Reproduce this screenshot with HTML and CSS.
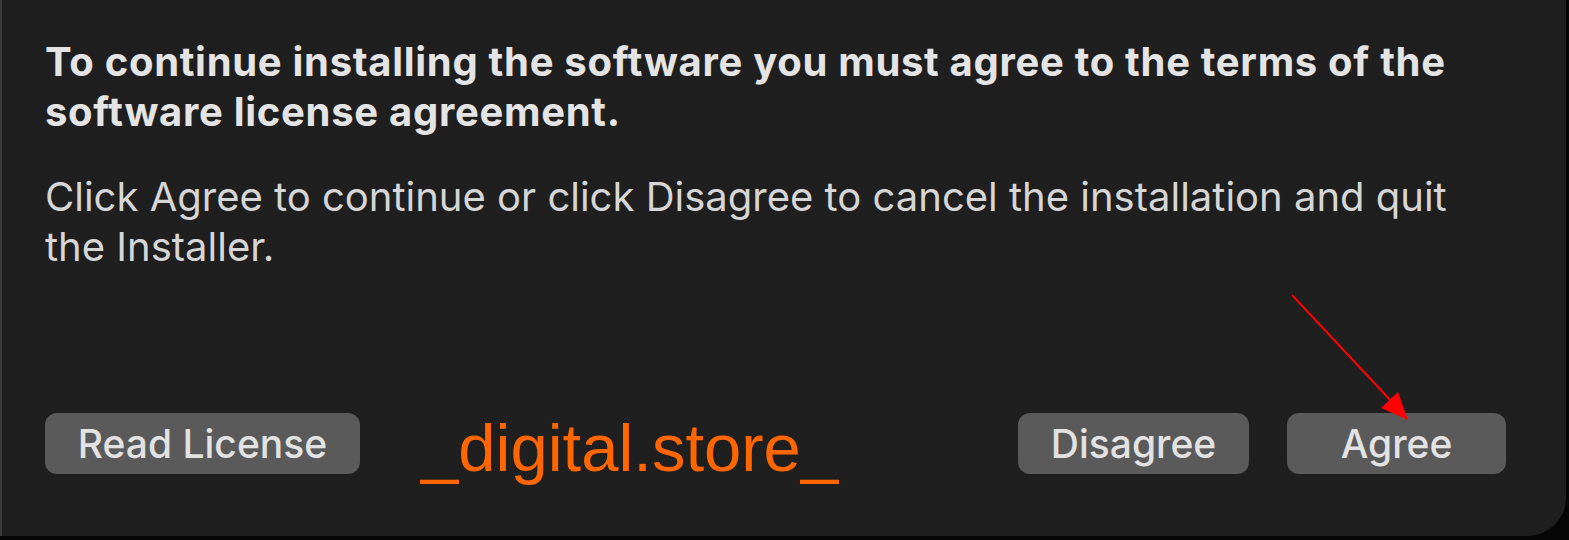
FILE: index.html
```html
<!DOCTYPE html>
<html>
<head>
<meta charset="utf-8">
<link rel="stylesheet" href="styles.css">
</head>
<body>
<div class="dialog">
  <p class="title">To continue installing the software you must agree to the terms of the software license agreement.</p>
  <p class="body">Click Agree to continue or click Disagree to cancel the installation and quit the Installer.</p>
  <div class="actions">
    <button class="btn btn-read">Read License</button>
    <span class="brand">_digital.store_</span>
    <div class="spacer"></div>
    <button class="btn btn-disagree">Disagree</button>
    <button class="btn btn-agree">Agree</button>
  </div>
  <svg class="arrow" width="140" height="140" viewBox="0 0 140 140">
    <line x1="2" y1="5" x2="103" y2="113" stroke="#ff0000" stroke-width="2"/>
    <polygon points="118,130 91,118 108,102" fill="#ff0000"/>
  </svg>
</div>
</body>
</html>
```

FILE: styles.css
```css
html, body {
  margin: 0;
  padding: 0;
  background: #050505;
}
body {
  width: 1569px;
  height: 540px;
  overflow: hidden;
}
.dialog {
  position: relative;
  box-sizing: border-box;
  width: 1566px;
  height: 536px;
  background: #1f1f1f;
  border-left: 2px solid #3a3a3a;
  border-bottom-right-radius: 38px;
  padding: 37px 60px 0 43px;
  display: flex;
  flex-direction: column;
  font-family: Inter, "Noto Sans", sans-serif;
}
.title {
  margin: 0;
  font-size: 40px;
  font-weight: 700;
  letter-spacing: 0.7px;
  line-height: 50px;
  color: #e4e4e4;
  width: 1470px;
}
.body {
  margin: 35px 0 0 0;
  font-size: 40px;
  font-weight: 400;
  line-height: 50px;
  color: #d6d6d6;
  width: 1470px;
}
.actions {
  margin-top: auto;
  margin-bottom: 62px;
  display: flex;
  align-items: center;
}
.btn {
  height: 61px;
  border: none;
  border-radius: 12px;
  background: #5a5a5a;
  color: #e2e2e2;
  font-family: Inter, "Noto Sans", sans-serif;
  font-size: 39px;
  font-weight: 500;
  padding: 0;
}
.btn-read { width: 315px; }
.btn-disagree { width: 231px; margin-right: 38px; }
.btn-agree { width: 219px; }
.brand {
  margin-left: 61px;
  font-family: "Liberation Sans", Arial, sans-serif;
  font-size: 67px;
  color: #ff6600;
  line-height: 61px;
  position: relative;
  top: 4px;
}
.spacer { flex: 1; }
.arrow {
  position: absolute;
  left: 1288px;
  top: 290px;
}
```
